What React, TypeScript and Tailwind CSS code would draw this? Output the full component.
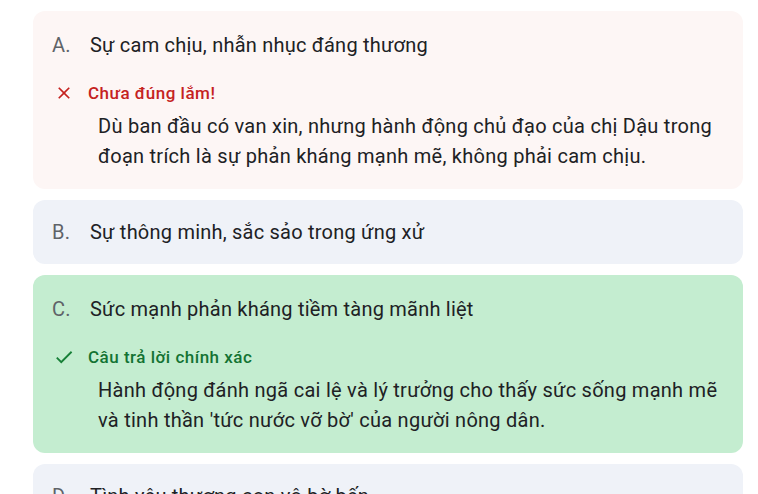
import React from "react";

type Opt = {
  letter: string;
  text: string;
  state: "wrong" | "right" | "none";
  label?: string;
  explain?: string;
};

const opts: Opt[] = [
  {
    letter: "A.",
    text: "Sự cam chịu, nhẫn nhục đáng thương",
    state: "wrong",
    label: "Chưa đúng lắm!",
    explain:
      "Dù ban đầu có van xin, nhưng hành động chủ đạo của chị Dậu trong đoạn trích là sự phản kháng mạnh mẽ, không phải cam chịu.",
  },
  { letter: "B.", text: "Sự thông minh, sắc sảo trong ứng xử", state: "none" },
  {
    letter: "C.",
    text: "Sức mạnh phản kháng tiềm tàng mãnh liệt",
    state: "right",
    label: "Câu trả lời chính xác",
    explain:
      "Hành động đánh ngã cai lệ và lý trưởng cho thấy sức sống mạnh mẽ và tinh thần 'tức nước vỡ bờ' của người nông dân.",
  },
  { letter: "D.", text: "Tình yêu thương con vô bờ bến", state: "none" },
];

function XIcon() {
  return (
    <svg width="20" height="20" viewBox="0 0 24 24" className="shrink-0">
      <path
        d="M19 6.41 17.59 5 12 10.59 6.41 5 5 6.41 10.59 12 5 17.59 6.41 19 12 13.41 17.59 19 19 17.59 13.41 12z"
        fill="#c5221f"
      />
    </svg>
  );
}

function CheckIcon() {
  return (
    <svg width="22" height="22" viewBox="0 0 24 24" className="shrink-0">
      <path d="M9 16.17 4.83 12l-1.42 1.41L9 19 21 7l-1.41-1.41z" fill="#188038" />
    </svg>
  );
}

export default function App() {
  return (
    <div
      className="w-[758px] h-[494px] overflow-hidden bg-white"
      style={{ fontFamily: "Roboto, 'Noto Sans', sans-serif" }}
    >
      <div className="ml-[33px] w-[710px] pt-[11px] flex flex-col gap-[11px]">
        {opts.map((o) => {
          const bg =
            o.state === "wrong"
              ? "bg-[#fdf6f5]"
              : o.state === "right"
              ? "bg-[#c4edd0]"
              : "bg-[#eff2f8]";
          const pad = o.label ? "pt-[20px] pb-[18px]" : "py-[18px]";
          return (
            <div key={o.letter} className={`${bg} ${pad} rounded-xl pl-[19px] pr-5`}>
              <div className="flex items-center text-[20px] leading-[28px] tracking-[0.22px]">
                <span className="w-[38px] shrink-0 text-[#5f6368]">{o.letter}</span>
                <span className="text-[#202124]">{o.text}</span>
              </div>
              {o.label && (
                <div className="mt-[22px]">
                  <div className="flex items-center h-6">
                    <span className="w-[36px] flex items-center justify-center pr-[12px]">
                      {o.state === "wrong" ? <XIcon /> : <CheckIcon />}
                    </span>
                    <span
                      className={`text-[17px] font-medium leading-6 tracking-[0.5px] ${
                        o.state === "wrong" ? "text-[#c5221f]" : "text-[#137333]"
                      }`}
                    >
                      {o.label}
                    </span>
                  </div>
                  <p className="mt-[6px] pl-[46px] text-[20px] leading-[30px] tracking-[0.26px] text-[#202124]">
                    {o.explain}
                  </p>
                </div>
              )}
            </div>
          );
        })}
      </div>
    </div>
  );
}
